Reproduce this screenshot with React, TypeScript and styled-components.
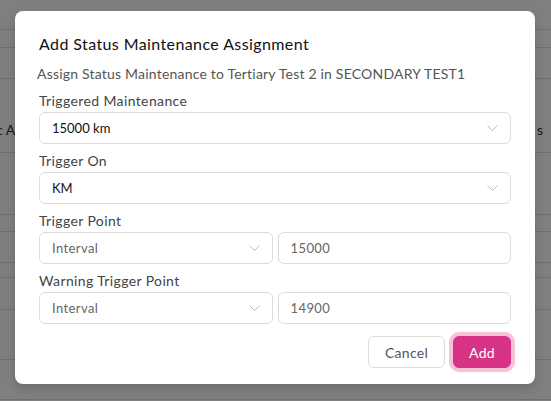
import * as React from 'react'
import styled, {createGlobalStyle} from 'styled-components'

const GlobalStyle = createGlobalStyle`
  html, body {
    margin: 0;
    padding: 0;
    background: #fff;
    font-family: Lato, "Noto Sans", sans-serif;
  }
  * {
    box-sizing: border-box;
  }
`

const Page = styled.div`
  width: 551px;
  height: 401px;
  overflow: hidden;
  position: relative;
  background: #fff;
`

const BgRow = styled.div<{$h: number}>`
  height: ${props => props.$h}px;
  border-bottom: 1px solid #dedede;
  display: flex;
  justify-content: space-between;
  align-items: flex-end;
  padding: 0 0 14px;
  font-size: 14px;
  color: #333;
  span:first-child {
    margin-left: -4px;
  }
  span:last-child {
    margin-right: 8px;
  }
`

const Overlay = styled.div`
  position: absolute;
  inset: 0;
  background: rgba(0, 0, 0, 0.5);
  padding: 11px 16px 0 15px;
`

const Modal = styled.div`
  width: 520px;
  height: 373px;
  background: #fff;
  border-radius: 8px;
  box-shadow: 0 4px 10px rgba(0, 0, 0, 0.15);
  padding: 21px 24px 0;
  display: flex;
  flex-direction: column;
`

const Title = styled.h2`
  margin: 0;
  font-size: 16px;
  line-height: 24px;
  font-weight: 400;
  letter-spacing: 0.4px;
  color: #111;
`

const Subtitle = styled.p`
  margin: 8px 0 0 -2px;
  font-size: 14px;
  line-height: 20px;
  letter-spacing: 0.2px;
  color: #555;
`

const Field = styled.div`
  margin-top: 7px;
  display: flex;
  flex-direction: column;
  gap: 1px;
`

const Label = styled.label`
  font-size: 14px;
  line-height: 20px;
  letter-spacing: 0.38px;
  color: #444;
`

const Pair = styled.div`
  display: grid;
  grid-template-columns: 1fr 1fr;
  gap: 5px;
`

const Box = styled.div<{$strong?: boolean}>`
  height: 32px;
  border: 1px solid #dcdcdc;
  border-radius: 6px;
  padding: 0 12px;
  display: flex;
  align-items: center;
  justify-content: space-between;
  font-size: 13px;
  letter-spacing: ${props => props.$strong ? 0 : 0.4}px;
  color: ${props => props.$strong ? '#111' : '#666'};
  font-weight: 400;
  svg {
    flex-shrink: 0;
  }
`

const Actions = styled.div`
  margin-top: 12px;
  display: flex;
  justify-content: flex-end;
  gap: 8px;
`

const Button = styled.button<{$primary?: boolean}>`
  height: 32px;
  padding: 0 ${props => props.$primary ? 15 : 16}px;
  border-radius: 6px;
  font-family: inherit;
  font-size: 14px;
  letter-spacing: 0.3px;
  border: 1px solid ${props => props.$primary ? '#d63384' : '#dcdcdc'};
  background: ${props => props.$primary ? '#d63384' : '#fff'};
  color: ${props => props.$primary ? '#fff' : '#555'};
  box-shadow: ${props => props.$primary ? '0 0 0 4px #f7c1da' : 'none'};
`

const Chevron: React.FC = () => (
  <svg width="11" height="6" viewBox="0 0 11 6">
    <path d="M0.5 0.5 L5.5 5.5 L10.5 0.5" fill="none" stroke="#bdbdbd" strokeWidth="1"/>
  </svg>
)

const Select: React.FC<{value: string, strong?: boolean}> = ({value, strong}) => (
  <Box $strong={strong}>
    <span>{value}</span>
    <Chevron/>
  </Box>
)

const rows = [30, 18, 31, 74, 62, 17, 31, 5, 32, 50, 40]

const App: React.FC = () => {
  return (
    <Page>
      <GlobalStyle/>
      {rows.map((h, i) => (
        <BgRow key={i} $h={h}>
          {i === 3 && <><span>c A</span><span>s</span></>}
        </BgRow>
      ))}

      <Overlay>
        <Modal>
          <Title>Add Status Maintenance Assignment</Title>
          <Subtitle>Assign Status Maintenance to Tertiary Test 2 in SECONDARY TEST1</Subtitle>

          <Field>
            <Label>Triggered Maintenance</Label>
            <Select value="15000 km" strong/>
          </Field>

          <Field>
            <Label>Trigger On</Label>
            <Select value="KM" strong/>
          </Field>

          <Field>
            <Label>Trigger Point</Label>
            <Pair>
              <Select value="Interval"/>
              <Box>15000</Box>
            </Pair>
          </Field>

          <Field>
            <Label>Warning Trigger Point</Label>
            <Pair>
              <Select value="Interval"/>
              <Box>14900</Box>
            </Pair>
          </Field>

          <Actions>
            <Button>Cancel</Button>
            <Button $primary>Add</Button>
          </Actions>
        </Modal>
      </Overlay>
    </Page>
  )
}

export default App
